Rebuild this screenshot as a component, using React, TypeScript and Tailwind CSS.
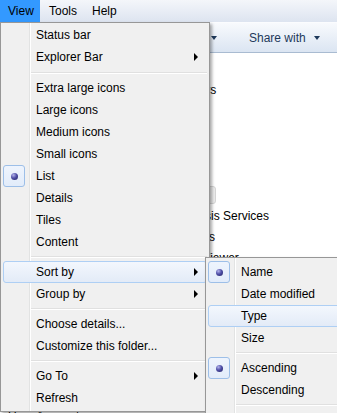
import React from "react";

type ItemProps = {
    label: string;
    checked?: boolean;
    arrow?: boolean;
    hover?: boolean;
};

function MenuItem({ label, checked, arrow, hover }: ItemProps) {
    return (
        <div
            className={
                "relative h-[22px] flex items-center justify-between pl-[32px] pr-[8px] rounded-[3px] border " +
                (hover
                    ? "border-[#aecff4] bg-gradient-to-b from-[#f3f7fd] to-[#e3ebf7]"
                    : "border-transparent")
            }
        >
            {checked && (
                <span className="absolute left-[-1px] top-[-1px] w-[22px] h-[22px] rounded-[3px] border border-[#9dbfe8] bg-gradient-to-b from-[#eef4fd] to-[#e2ecfa] flex items-center justify-center">
                    <span className="w-[7px] h-[7px] rounded-full bg-[radial-gradient(circle_at_35%_30%,#b4b4ec_0%,#5050a8_45%,#1e1e5e_100%)]" />
                </span>
            )}
            <span className="leading-none">{label}</span>
            {arrow && (
                <span className="w-0 h-0 border-y-[4px] border-y-transparent border-l-[4px] border-l-black" />
            )}
        </div>
    );
}

function Separator({ tall }: { tall?: boolean }) {
    return (
        <div className={(tall ? "h-[9px]" : "h-[8px]") + " flex items-center pl-[28px]"}>
            <div className="w-full h-[2px] border-t border-[#e0e0e0] border-b border-b-white" />
        </div>
    );
}

const rows = [
    "", "Printers", "", "", "", "", "", "Analysis Services", "Folders",
    "XPS Viewer", "", "", "", "", "",
];

const menuBg =
    "bg-[linear-gradient(to_right,#f0f0f0_28px,#e2e3e3_28px,#e2e3e3_29px,#ffffff_29px,#ffffff_30px,#f0f0f0_30px)]";

export default function App() {
    return (
        <div
            className="relative w-[337px] h-[413px] overflow-hidden bg-white text-[12px] text-black"
            style={{ fontFamily: '"Liberation Sans", Arial, sans-serif' }}
        >
            {/* Menu bar */}
            <div className="h-[22px] flex bg-gradient-to-b from-[#f4f6fa] to-[#dde4f0]">
                <div className="w-[40px] pl-[8px] flex items-center bg-[#3399ff]">View</div>
                <div className="pl-[9px] flex items-center">Tools</div>
                <div className="pl-[15px] flex items-center">Help</div>
            </div>

            {/* Toolbar */}
            <div className="h-[31px] flex items-center border-t border-t-[#fbfcfe] border-b border-b-[#a9bbd1] bg-gradient-to-b from-[#f8fafd] to-[#dbe5f2] text-[#1e395b]">
                <span className="ml-[211px] w-0 h-0 border-x-[3px] border-x-transparent border-t-[4px] border-t-[#1e395b]" />
                <span className="ml-[32px]">Share with</span>
                <span className="ml-[8px] w-0 h-0 border-x-[3px] border-x-transparent border-t-[4px] border-t-[#1e395b]" />
            </div>

            {/* Content */}
            <div className="flex">
                {/* navigation pane, hidden under the menu except its last row */}
                <div className="w-[165px] shrink-0 pt-[352px]">
                    <div className="h-[22px] flex items-center pl-[8px] whitespace-nowrap">User Accounts</div>
                </div>
                <div className="pt-[5px] flex-1">
                    {rows.map((r, i) =>
                        i === 6 ? (
                            <div key={i} className="h-[21px] flex items-center">
                                <span className="ml-[5px] w-[46px] h-[18px] rounded-[3px] border border-[#d5d5d5] bg-[#ececec]" />
                            </div>
                        ) : (
                            <div key={i} className="h-[21px] flex items-center pl-[10px] whitespace-nowrap">{r}</div>
                        )
                    )}
                </div>
            </div>

            {/* View menu */}
            <div className={"absolute left-0 top-[22px] w-[210px] px-[2px] pt-[1px] pb-[2px] border border-[#979797] shadow-[2px_2px_3px_rgba(0,0,0,0.35)] " + menuBg}>
                <MenuItem label="Status bar" />
                <MenuItem label="Explorer Bar" arrow />
                <Separator tall />
                <MenuItem label="Extra large icons" />
                <MenuItem label="Large icons" />
                <MenuItem label="Medium icons" />
                <MenuItem label="Small icons" />
                <MenuItem label="List" checked />
                <MenuItem label="Details" />
                <MenuItem label="Tiles" />
                <MenuItem label="Content" />
                <Separator />
                <MenuItem label="Sort by" arrow hover />
                <MenuItem label="Group by" arrow />
                <Separator />
                <MenuItem label="Choose details..." />
                <MenuItem label="Customize this folder..." />
                <Separator />
                <MenuItem label="Go To" arrow />
                <MenuItem label="Refresh" />
            </div>

            {/* Sort by submenu */}
            <div className={"absolute left-[205px] top-[257px] w-[150px] px-[2px] pt-[3px] pb-[24px] border border-[#979797] shadow-[2px_2px_3px_rgba(0,0,0,0.35)] " + menuBg}>
                <MenuItem label="Name" checked />
                <MenuItem label="Date modified" />
                <MenuItem label="Type" hover />
                <MenuItem label="Size" />
                <Separator />
                <MenuItem label="Ascending" checked />
                <MenuItem label="Descending" />
                <Separator />
            </div>
        </div>
    );
}
